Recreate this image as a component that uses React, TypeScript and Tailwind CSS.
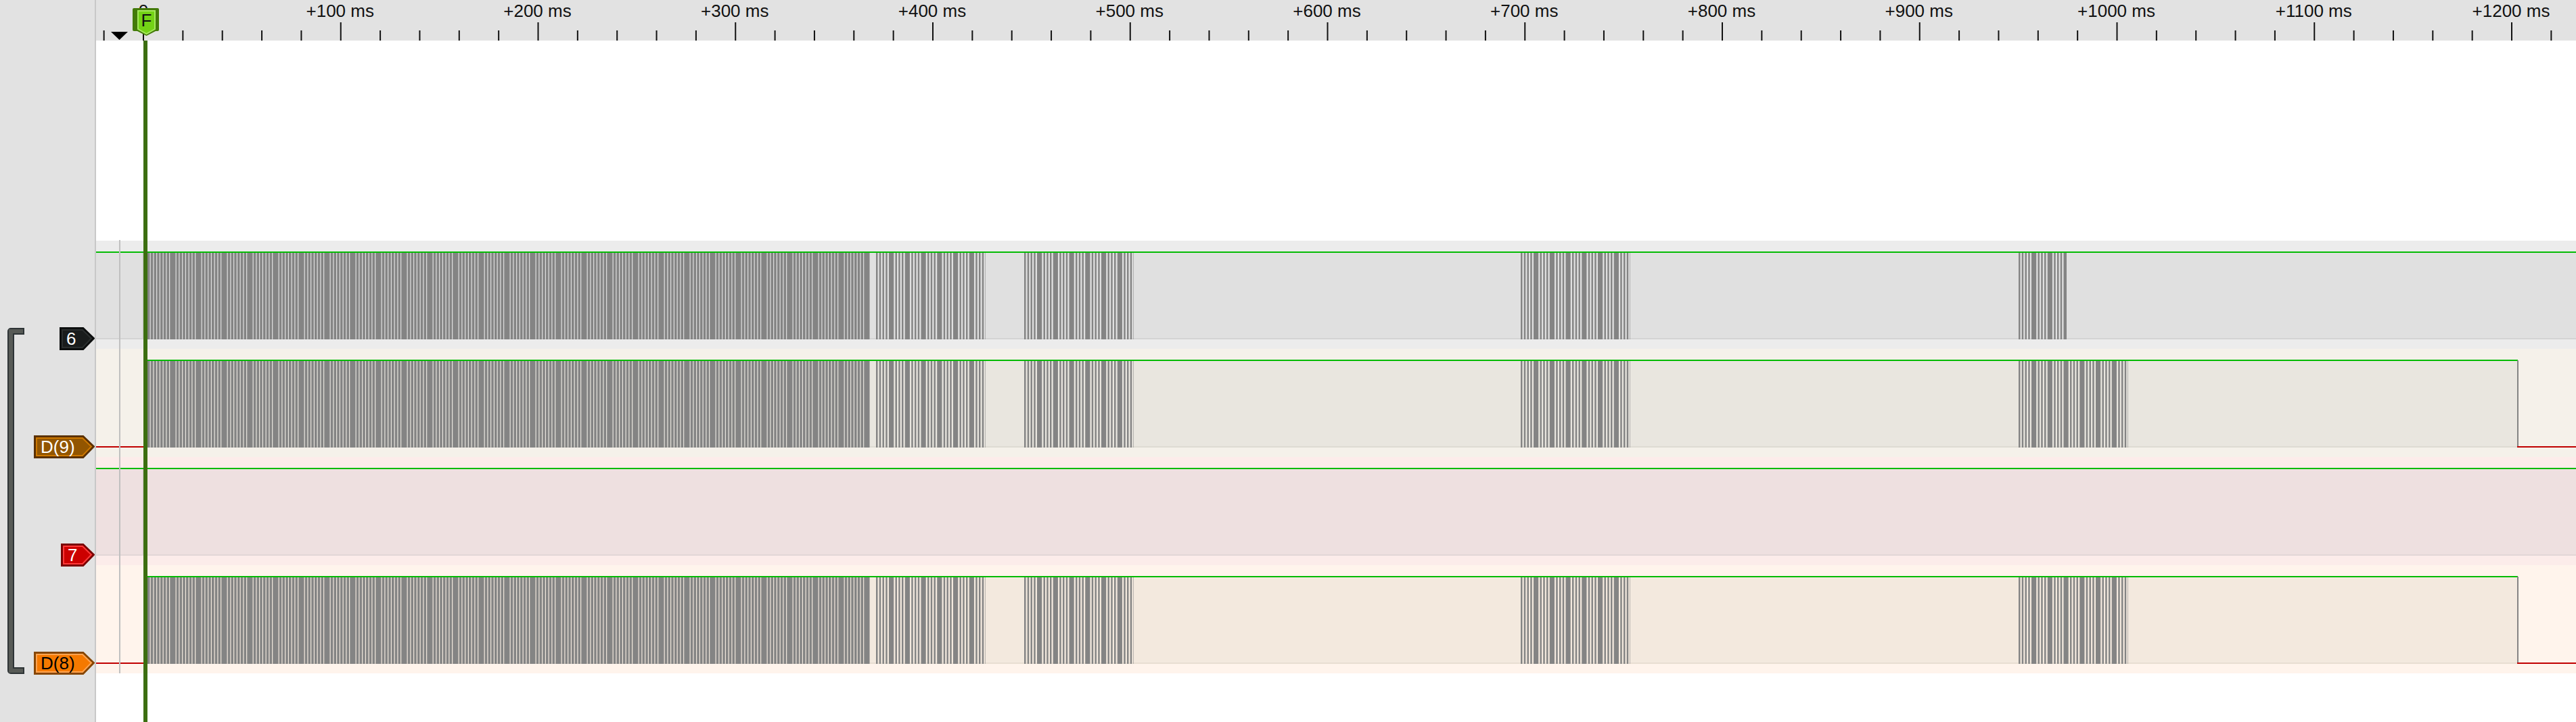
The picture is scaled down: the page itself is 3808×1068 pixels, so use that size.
import React from "react";

const FONT = "font-['Liberation_Sans',Arial,sans-serif]";
const ZERO_X = 212;
const MS100 = 291.75;

// time labels on the ruler, +100 ms .. +1200 ms
const majors = Array.from({ length: 12 }, (_, i) => i + 1);

// one long burst then the short ones, page x coordinates
const blocksShort = [
  { from: 218, to: 1286, step: 8, light: 1.2 },
  { from: 1295, to: 1457, step: 5, light: 2.3 },
  { from: 1514, to: 1676, step: 5, light: 2.3 },
  { from: 2248, to: 2410, step: 5, light: 2.3 },
  { from: 2984, to: 3055, step: 5, light: 2.3 },
];
const blocksLong = [...blocksShort.slice(0, 4), { from: 2984, to: 3146, step: 5, light: 2.3 }];

// dark bars of a burst as a single path, every nth gap is closed
function burstPath(blocks: typeof blocksShort) {
  const period = 4.75;
  let d = "";
  for (const b of blocks) {
    let x = b.from;
    let i = 1;
    while (x < b.to) {
      let end = x + period - b.light;
      while (i % b.step === 0) {
        end += period;
        i++;
      }
      end = Math.min(end, b.to);
      d += `M${x.toFixed(2)} 18H${end.toFixed(2)}V146H${x.toFixed(2)}Z`;
      x = end + b.light;
      i++;
    }
  }
  return d;
}

function Ruler() {
  const ticks = Array.from({ length: 64 }, (_, i) => 153.65 + i * (MS100 / 5));
  return (
    <div className="relative h-[60px] bg-[#e2e2e2]">
      <span className="absolute top-0 left-[70px] -translate-x-1/2 text-[26px] leading-[32px] text-[#111]">0</span>
      {majors.map((m) => (
        <span
          key={m}
          className="absolute top-0 -translate-x-1/2 whitespace-nowrap text-[26px] leading-[32px] text-[#111]"
          style={{ left: ZERO_X - 142 + m * MS100 - 1 }}
        >
          +{m * 100} ms
        </span>
      ))}
      <svg className="absolute inset-0 h-full w-full" viewBox="142 0 3666 60">
        {ticks.map((x, i) => (
          <rect key={i} x={x - 1} y={i % 5 === 1 ? 33 : 45} width="2" height={i % 5 === 1 ? 27 : 15} fill="#111" />
        ))}
        <polygon points="164,47 189,47 176.5,59" fill="#000" />
        <rect x="196" y="12" width="39" height="34" rx="2" fill="#437a0a" />
        <polygon points="201,13 232,13 232,45 216.5,53 201,45" fill="#437a0a" />
        <polygon points="204,16 229,16 229,43 216.5,50 204,43" fill="#73d216" stroke="#a4e85c" strokeWidth="2" />
        <text x="216.5" y="39" textAnchor="middle" fontSize="26" fill="#111">
          F
        </text>
      </svg>
    </div>
  );
}

function TraceRow({
  band,
  fill,
  edge,
  high,
  blocks,
}: {
  band: string;
  fill: string;
  edge: string;
  high?: boolean;
  blocks?: typeof blocksShort;
}) {
  const start = high ? 142 : 218;
  const end = high ? 3808 : 3722;
  return (
    <div className={`relative h-[160px] ${band}`}>
      <svg className="absolute inset-0 h-full w-full" viewBox="142 0 3666 160">
        <rect x={start} y="18" width={end - start} height="128" fill={fill} />
        <rect x={start} y="144" width={end - start} height="2" fill={edge} />
        {high && <rect x="210" y="18" width="2" height="128" fill={edge} />}
        {blocks && <path d={burstPath(blocks)} fill="#848484" />}
        <rect x={start} y="16" width={end - start} height="2" fill="#04bb04" />
        {!high && (
          <>
            <rect x="142" y="144" width="76" height="2" fill="#c00000" />
            <rect x="3721" y="17" width="2" height="128" fill="#848484" />
            <rect x="3721" y="144" width="87" height="2" fill="#c00000" />
          </>
        )}
      </svg>
    </div>
  );
}

function Tag({
  text,
  width,
  fill,
  line,
  border,
  ink,
}: {
  text: string;
  width: number;
  fill: string;
  line: string;
  border: string;
  ink: string;
}) {
  const w = width;
  return (
    <div className="relative h-[34px]" style={{ width }}>
      <svg className="absolute inset-0 h-full w-full" viewBox={`0 0 ${w} 34`}>
        <polygon points={`1,1 ${w - 17},1 ${w - 1},16.5 ${w - 17},33 1,33`} fill={border} stroke={border} strokeWidth="2" />
        <polygon points={`4,4 ${w - 18},4 ${w - 5},16.5 ${w - 18},30 4,30`} fill={fill} stroke={line} strokeWidth="2" />
      </svg>
      <span className="absolute top-0 left-[10px] text-[26px] leading-[34px]" style={{ color: ink }}>
        {text}
      </span>
    </div>
  );
}

export default function App() {
  return (
    <div className={`flex h-[1068px] w-[3808px] overflow-hidden bg-white ${FONT}`}>
      {/* channel names */}
      <div className="flex w-[142px] shrink-0 justify-between border-r-2 border-[#c8c8c8] bg-[#e2e2e2] pl-[11px]">
        <svg className="mt-[485px] h-[512px] w-[25px]" viewBox="0 0 25 512">
          <path d="M25 5H5V507H25" fill="none" stroke="#2e3436" strokeWidth="10" strokeLinejoin="round" />
          <path d="M23 5H5V507H23" fill="none" stroke="#575a56" strokeWidth="6" />
        </svg>
        <div className="mt-[484px] flex flex-col items-end gap-[126px]">
          <Tag text="6" width={52} fill="#191c1c" line="#2a2e2e" border="#0c0e0e" ink="#fff" />
          <Tag text="D(9)" width={90} fill="#925500" line="#cc7700" border="#5a3000" ink="#fff" />
          <Tag text="7" width={50} fill="#cc0000" line="#ff3a3a" border="#7a0000" ink="#fff" />
          <Tag text="D(8)" width={90} fill="#f57900" line="#ffa352" border="#874600" ink="#000" />
        </div>
      </div>

      <div className="relative min-w-0 flex-1">
        <Ruler />
        <div className="pt-[296px]">
          <TraceRow band="bg-[#ececec]" fill="#e0e0e0" edge="#d4d4d4" high blocks={blocksShort} />
          <TraceRow band="bg-[#f5f1ea]" fill="#e9e6df" edge="#dedbd3" blocks={blocksLong} />
          <TraceRow band="bg-[#fcecea]" fill="#eee0e0" edge="#e2d6d6" high />
          <TraceRow band="bg-[#fff4ec]" fill="#f3e9de" edge="#e8ded2" blocks={blocksLong} />
        </div>

        {/* trigger line and cursor */}
        <div className="absolute top-[355px] left-[34px] h-[641px] w-[2px] bg-[#c0c0c0]" />
        <div className="absolute top-[60px] bottom-0 left-[70px] w-[6px] bg-[#3c6e10]" />
      </div>
    </div>
  );
}
